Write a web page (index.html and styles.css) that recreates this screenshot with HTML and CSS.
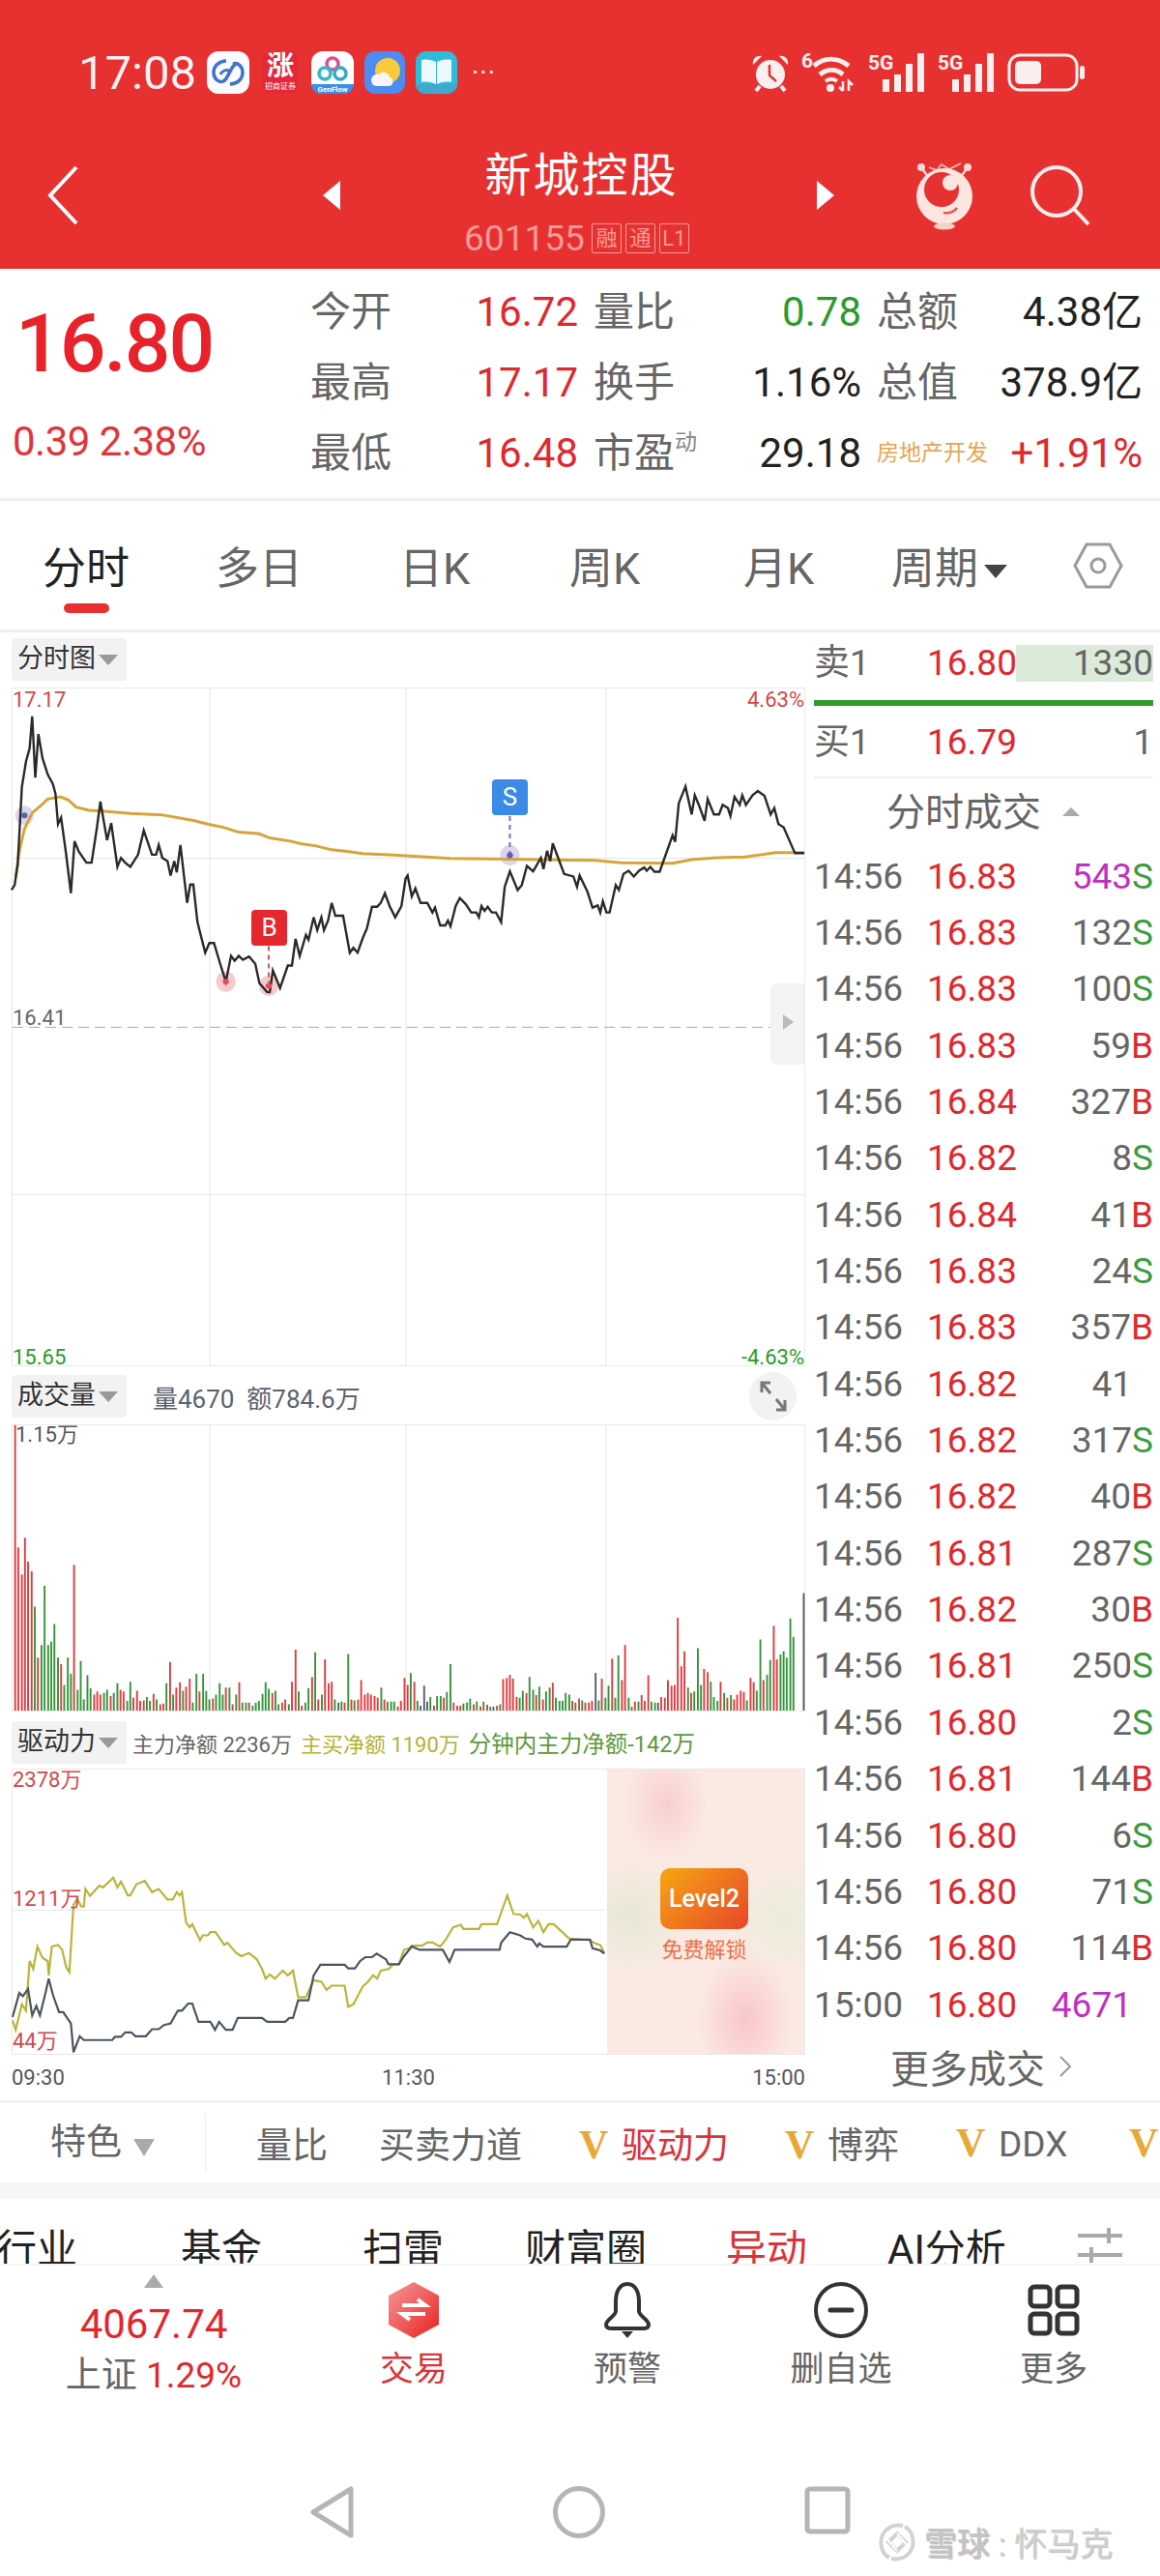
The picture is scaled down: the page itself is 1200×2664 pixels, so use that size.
FILE: index.html
```html
<!DOCTYPE html>
<html lang="zh">
<head>
    <meta charset="UTF-8">
    <meta name="viewport" content="width=device-width, initial-scale=1.0">
    <title>新城控股</title>
    <link rel="stylesheet" href="styles.css">
</head>
<body>
<div class="phone">
    <header class="top">
        <div class="status">
            <span class="clock">17:08</span>
            <div class="apps">
                <svg width="44" height="44" viewBox="0 0 44 44"><rect width="44" height="44" rx="12" fill="#fbfbff"/><path d="M20 10c-7 0-13 5-13 12 0 6 5 11 10 9 3-1 4-5 7-10 2-4 4-8 7-8M24 34c7 0 13-5 13-12 0-6-5-11-10-9" fill="none" stroke="#3f74c9" stroke-width="3.5"/><path d="M14 24c2-4 6-5 9-4" fill="none" stroke="#3f74c9" stroke-width="3"/></svg>
                <span class="app-zhang">涨<small>招商证券</small></span>
                <svg width="44" height="44" viewBox="0 0 44 44"><rect width="44" height="44" rx="12" fill="#fff"/><path d="M0 34h44a10 10 0 0 1-10 10H10A10 10 0 0 1 0 34z" fill="#3b8fe8"/><circle cx="22" cy="13" r="6" fill="none" stroke="#d8508f" stroke-width="3.5"/><circle cx="14" cy="23" r="6" fill="none" stroke="#36b7c9" stroke-width="3.5"/><circle cx="30" cy="23" r="6" fill="none" stroke="#36a9c9" stroke-width="3.5"/><text x="22" y="42" class="micro">GenFlow</text></svg>
                <svg width="42" height="44" viewBox="0 0 42 44"><rect width="42" height="44" rx="11" fill="#4b8df0"/><circle cx="24" cy="20" r="13" fill="#fbc93c"/><path d="M7 30c0-4 4-7 8-6 3-4 10-2 11 3 4 0 5 8 0 9H13c-4 0-6-3-6-6z" fill="#f4f6fb"/></svg>
                <svg width="43" height="44" viewBox="0 0 43 44"><rect width="43" height="44" rx="11" fill="#2dbdd8"/><path d="M0 34h43v0a10 10 0 0 1-10 10H10A10 10 0 0 1 0 34z" fill="#3fa8cf"/><path d="M6 9c6-1 11 0 15 2v23c-4-2-9-3-15-2zM37 9c-6-1-11 0-15 2v23c4-2 9-3 15-2z" fill="#eef8fd"/></svg>
                <span class="more-dots">···</span>
            </div>
            <div class="sys">
                <svg width="40" height="40" viewBox="0 0 40 40"><circle cx="20" cy="22" r="15" fill="#fbeeee"/><path d="M19 12v11l7 6" fill="none" stroke="#e73131" stroke-width="2.5"/><path d="M2 12C1 6 5 2 11 3zM38 12c1-6-3-10-9-9z" fill="#fbeeee"/><path d="M9 34l-4 5M31 34l4 5" stroke="#fbeeee" stroke-width="4"/></svg>
                <svg class="tall" width="57" height="50" viewBox="0 -10 57 50"><text x="0" y="15" class="tiny">6</text><path d="M13 13c11-9 24-9 36 0M19 22c8-6 17-6 24 0" fill="none" stroke="#fbeeee" stroke-width="5"/><path d="M25 29c4-3 8-3 12 0" fill="none" stroke="#fbeeee" stroke-width="4"/><circle cx="30" cy="36" r="4" fill="#fbeeee"/><path d="M43 29v10M39 35l4 4M49 39V29l4 4" fill="none" stroke="#fbeeee" stroke-width="2.5"/></svg>
                <svg class="tall" width="60" height="50" viewBox="0 -10 60 50"><text x="0" y="17" class="tiny">5G</text><path d="M15 27h7v13h-7zM27 22h7v18h-7zM39 11h7v29h-7zM51 0h7v40h-7z" fill="#fbeeee"/></svg>
                <svg class="tall" width="60" height="50" viewBox="0 -10 60 50"><text x="0" y="17" class="tiny">5G</text><path d="M15 27h7v13h-7zM27 22h7v18h-7zM39 11h7v29h-7zM51 0h7v40h-7z" fill="#fbeeee"/></svg>
                <svg width="81" height="40" viewBox="0 0 81 40"><rect x="2" y="2" width="70" height="36" rx="11" fill="none" stroke="#fbeeee" stroke-width="3"/><rect x="8" y="8" width="27" height="24" rx="5" fill="#fbeeee"/><rect x="75" y="13" width="5" height="14" rx="2.5" fill="#fbeeee"/></svg>
            </div>
        </div>
        <div class="nav">
            <svg class="back" width="34" height="62" viewBox="0 0 34 62"><path d="M31 2L4 31l27 29" fill="none" stroke="#fff" stroke-width="4"/></svg>
            <svg class="step" width="20" height="30" viewBox="0 0 20 30"><path d="M19 0v30L1 15z" fill="#fff"/></svg>
            <div class="title">
                <div class="name">新城控股</div>
                <div class="code"><span>601155</span><i>融</i><i>通</i><i>L1</i></div>
            </div>
            <svg class="step step-next" width="20" height="30" viewBox="0 0 20 30"><path d="M1 0v30l18-15z" fill="#fff"/></svg>
            <svg class="mascot" width="60" height="76" viewBox="0 0 60 76"><path d="M14 10l8 3 5-6 8 5 12-6" fill="none" stroke="#f9c8bd" stroke-width="1.5"/><circle cx="6" cy="10" r="4" fill="#fbd9d2"/><circle cx="54" cy="10" r="4" fill="#fbd9d2"/><path d="M8 13l6 8M52 13l-6 8" stroke="#fbd9d2" stroke-width="2.5"/><circle cx="30" cy="40" r="29" fill="#fde6e1"/><circle cx="27" cy="33" r="18" fill="#e73131"/><circle cx="36" cy="26" r="8" fill="#fde6e1"/><path d="M29 57c6 1 11-1 14-5" fill="none" stroke="#e8564e" stroke-width="2.5"/><ellipse cx="30" cy="71" rx="11" ry="3.5" fill="#f8d0c8"/></svg>
            <svg class="search" width="64" height="64" viewBox="0 0 64 64"><circle cx="28" cy="28" r="25" fill="none" stroke="#fdeeee" stroke-width="4"/><path d="M46 46l15 16" stroke="#fdeeee" stroke-width="4"/></svg>
        </div>
    </header>

    <section class="quote">
        <div class="last">
            <div class="last-price">16.80</div>
            <div class="last-change">0.39 2.38%</div>
        </div>
        <div class="stats">
            <span class="lab">今开</span><span class="val red">16.72</span>
            <span class="lab ind">量比</span><span class="val green">0.78</span>
            <span class="lab ind">总额</span><span class="val">4.38亿</span>
            <span class="lab">最高</span><span class="val red">17.17</span>
            <span class="lab ind">换手</span><span class="val">1.16%</span>
            <span class="lab ind">总值</span><span class="val">378.9亿</span>
            <span class="lab">最低</span><span class="val red">16.48</span>
            <span class="lab ind">市盈<sup>动</sup></span><span class="val">29.18</span>
            <span class="lab ind sector">房地产开发</span><span class="val red">+1.91%</span>
        </div>
    </section>

    <nav class="tabs">
        <span class="tab active">分时</span>
        <span class="tab">多日</span>
        <span class="tab">日K</span>
        <span class="tab">周K</span>
        <span class="tab">月K</span>
        <span class="tab">周期<b class="tri-down"></b></span>
        <svg width="52" height="48" viewBox="0 0 52 48"><path d="M14 2h24l12 22-12 22H14L2 24z" fill="none" stroke="#9a9a9a" stroke-width="3"/><circle cx="26" cy="24" r="7" fill="none" stroke="#9a9a9a" stroke-width="3"/></svg>
    </nav>

    <main class="market">
        <div class="charts">
            <div class="pane-head"><span class="picker">分时图<b></b></span></div>
            <div class="plot plot-price">
                <svg class="plot-svg" viewBox="22 153 1533 2106" preserveAspectRatio="none">
                    <path class="grid-line" d="M404 153V2259M784 153V2259M1171 153V2259M22 681H1555M22 1728H1555"/>
                    <path class="dash-line" d="M22 1207H1555"/>
                    <ellipse cx="45" cy="548" rx="18" ry="30" fill="#c9c4e6" opacity=".7"/>
                    <ellipse cx="435" cy="1065" rx="19" ry="32" fill="#f3b5b5" opacity=".7"/>
                    <ellipse cx="518" cy="1078" rx="19" ry="32" fill="#f3b5b5" opacity=".7"/>
                    <ellipse cx="985" cy="672" rx="19" ry="32" fill="#c9c4e6" opacity=".7"/>
                    <path class="avg-line" d="M28 740 35 660 45 590 60 540 75 520 90 497 115 490 130 500 145 522 170 532 200 535 250 542 310 546 370 563 400 575 430 585 460 600 500 605 520 618 560 628 580 636 610 643 640 655 670 660 700 667 760 671 870 682 985 684 1100 687 1150 688 1200 695 1300 697 1340 685 1380 680 1440 677 1500 664 1555 664"/>
                    <path class="price-line" d="M20 780 26 765 32 700 40 460 48 380 55 340 60 240 66 430 72 295 80 370 90 420 100 450 105 480 110 575 116 555 125 660 135 790 142 628 150 660 165 695 175 695 185 590 192 505 205 625 213 572 225 708 232 680 240 695 250 708 265 670 276 595 292 670 300 670 305 640 312 680 322 690 328 735 335 690 340 725 347 640 360 820 366 763 372 763 380 880 395 975 403 945 412 945 425 1015 435 1065 445 985 452 1000 460 985 468 997 480 987 492 1010 500 1070 515 1098 520 1098 526 1030 540 1085 555 1015 563 1015 570 932 578 985 590 920 595 935 605 865 612 905 620 865 625 905 633 875 640 820 647 860 662 860 675 975 682 960 690 975 700 930 708 900 718 832 728 832 735 820 743 790 752 830 763 865 775 830 783 745 787 735 795 800 802 775 812 820 825 820 835 850 840 835 850 890 860 890 865 875 870 893 880 830 888 805 900 825 910 850 920 850 925 865 930 830 936 845 942 832 950 850 958 850 968 880 975 770 985 722 1000 780 1008 765 1018 705 1030 722 1045 680 1050 715 1057 658 1063 690 1068 635 1090 730 1108 738 1115 770 1120 735 1135 785 1145 835 1155 828 1160 850 1165 815 1172 850 1178 850 1190 765 1196 780 1205 730 1215 720 1225 738 1235 720 1245 710 1250 720 1257 708 1265 723 1275 723 1300 610 1305 630 1312 510 1325 458 1337 545 1343 485 1352 520 1362 565 1368 497 1380 545 1390 545 1397 515 1407 525 1412 550 1420 490 1430 515 1435 485 1442 515 1455 485 1465 472 1478 487 1490 545 1497 525 1505 575 1515 585 1530 640 1537 665 1555 665"/>
                    <path class="pin-b" d="M518 955V1070"/>
                    <path class="pin-s" d="M985 550V665"/>
                    <ellipse cx="45" cy="548" rx="6" ry="9" fill="#5a5fb5"/>
                    <ellipse cx="435" cy="1065" rx="6" ry="9" fill="#e0505a"/>
                    <ellipse cx="518" cy="1078" rx="6" ry="9" fill="#e0505a"/>
                    <ellipse cx="985" cy="672" rx="6" ry="9" fill="#5a5fb5"/>
                </svg>
                <span class="axis tl faded-red">17.17</span>
                <span class="axis tr faded-red">4.63%</span>
                <span class="axis base-label">16.41</span>
                <span class="axis bl green">15.65</span>
                <span class="axis br green">-4.63%</span>
                <span class="flag flag-b">B</span>
                <span class="flag flag-s">S</span>
                <div class="handle"><b></b></div>
            </div>

            <div class="pane-head">
                <span class="picker">成交量<b></b></span>
                <span class="volume-info">量4670&nbsp;&nbsp;额784.6万</span>
                <span class="expand"><svg width="28" height="32" viewBox="0 0 28 32"><path d="M2 12V2h9M2 2l9 11M26 20v10h-9M26 30L17 19" fill="none" stroke="#777" stroke-width="3"/></svg></span>
            </div>
            <div class="plot plot-vol">
                <svg class="plot-svg" viewBox="22 219 1533 891" preserveAspectRatio="none">
                    <path class="grid-line" d="M404 219V1110M784 219V1110M1171 219V1110"/>
                    <path class="bar-red" d="M27 218V1110M33 600V1110M40 685V1110M46 570V1110M52 645V1110M59 675V1110M71 945V1110M116 965V1110M141 655V1110M180 1060V1110M186 1050V1110M192 1060V1110M212 1065V1110M231 1045V1110M237 1050V1110M256 1070V1110M263 1048V1110M269 1080V1110M276 1078V1110M295 1058V1110M308 1090V1110M314 1088V1110M327 958V1110M339 1038V1110M346 1022V1110M358 1035V1110M365 1010V1110M384 1050V1110M410 1072V1110M435 1038V1110M448 1090V1110M461 1022V1110M480 1085V1110M525 1055V1110M544 1085V1110M550 1075V1110M563 1020V1110M570 920V1110M582 1095V1110M602 1005V1110M614 1075V1110M627 950V1110M634 1025V1110M640 1020V1110M665 1085V1110M678 1075V1110M691 1075V1110M697 1015V1110M704 1060V1110M710 1055V1110M716 1060V1110M723 1065V1110M729 1070V1110M742 1075V1110M768 1097V1110M774 1080V1110M781 1008V1110M787 1030V1110M800 1020V1110M838 1095V1110M857 1070V1110M876 1085V1110M883 1095V1110M889 1095V1110M915 1090V1110M928 1097V1110M941 1092V1110M960 1095V1110M972 1012V1110M979 1008V1110M985 998V1110M991 1010V1110M998 1068V1110M1017 1055V1110M1036 1062V1110M1049 1075V1110M1068 1023V1110M1106 1080V1110M1119 1072V1110M1131 1085V1110M1138 1085V1110M1144 1080V1110M1163 1010V1110M1183 948V1110M1202 1015V1110M1208 905V1110M1227 1082V1110M1240 1062V1110M1246 1080V1110M1253 1000V1110M1278 1068V1110M1285 1070V1110M1291 1015V1110M1298 1032V1110M1304 1030V1110M1310 820V1110M1317 972V1110M1323 925V1110M1336 1055V1110M1361 980V1110M1368 990V1110M1393 1020V1110M1406 1070V1110M1419 1075V1110M1425 1060V1110M1432 1048V1110M1438 1052V1110M1451 1008V1110M1457 1022V1110M1476 1015V1110M1496 845V1110M1502 950V1110"/>
                    <path class="bar-green" d="M65 785V1110M78 905V1110M84 720V1110M91 905V1110M97 895V1110M103 840V1110M110 945V1110M122 1030V1110M129 945V1110M135 995V1110M148 1045V1110M154 955V1110M160 1075V1110M167 1000V1110M173 1040V1110M199 1055V1110M205 1045V1110M218 1055V1110M225 1025V1110M244 1080V1110M250 1020V1110M282 1068V1110M288 1080V1110M301 1075V1110M320 1025V1110M333 1060V1110M352 1048V1110M371 1085V1110M378 995V1110M391 995V1110M397 1048V1110M403 1075V1110M416 1060V1110M423 1025V1110M429 1060V1110M442 1038V1110M455 1060V1110M467 1085V1110M474 1085V1110M487 1095V1110M493 1085V1110M499 1080V1110M506 1058V1110M512 1022V1110M518 1042V1110M531 1048V1110M537 1090V1110M557 1090V1110M576 1050V1110M589 1085V1110M595 1040V1110M608 928V1110M621 1060V1110M646 1075V1110M659 1082V1110M672 933V1110M684 1078V1110M736 1038V1110M748 1082V1110M755 1082V1110M761 1082V1110M793 993V1110M806 1080V1110M831 1068V1110M844 1065V1110M851 1065V1110M863 1052V1110M870 965V1110M895 1088V1110M902 1085V1110M908 1073V1110M921 1082V1110M934 1082V1110M947 1098V1110M966 1090V1110M1004 1070V1110M1010 1048V1110M1023 1005V1110M1030 1045V1110M1042 1035V1110M1055 1050V1110M1062 1038V1110M1074 1070V1110M1081 1080V1110M1087 1080V1110M1093 1055V1110M1100 1060V1110M1112 1085V1110M1125 1078V1110M1157 1078V1110M1170 1070V1110M1176 1032V1110M1189 1070V1110M1195 938V1110M1215 1070V1110M1221 1098V1110M1234 1082V1110M1259 1082V1110M1266 1085V1110M1330 1038V1110M1342 1050V1110M1349 915V1110M1355 1030V1110M1374 1020V1110M1380 1068V1110M1387 1080V1110M1400 1055V1110M1413 1062V1110M1444 1078V1110M1463 1048V1110M1470 888V1110M1483 998V1110M1489 952V1110M1509 935V1110M1515 925V1110M1521 945V1110M1528 822V1110M1534 880V1110"/>
                    <path class="bar-dark" d="M653 1085V1110M812 1095V1110M819 1032V1110M825 1082V1110M953 1098V1110M1151 992V1110M1272 1085V1110M1554 743V1110"/>
                </svg>
                <span class="axis vol-max">1.15万</span>
            </div>

            <div class="pane-head">
                <span class="picker">驱动力<b></b></span>
                <span class="legend grey">主力净额 2236万</span>
                <span class="legend olive">主买净额 1190万</span>
                <span class="legend moss">分钟内主力净额-142万</span>
            </div>
            <div class="plot plot-drive">
                <svg class="plot-svg" viewBox="22 147 1533 888" preserveAspectRatio="none">
                    <path class="grid-line" d="M22 586H1170"/>
                    <path class="drive-olive" d="M22 930 28 960 40 880 48 900 55 745 62 770 70 700 80 735 90 745 92 790 98 700 110 695 118 710 126 765 132 780 140 570 147 550 155 575 160 575 163 520 172 542 190 510 197 515 217 485 225 515 232 497 245 540 250 540 262 505 278 495 292 530 305 520 322 553 332 553 340 530 345 540 350 530 358 625 365 640 370 630 385 680 390 665 400 665 405 655 415 655 432 695 438 688 455 720 465 730 480 720 495 740 505 770 512 800 520 787 530 800 545 775 555 790 565 775 575 858 590 858 605 805 620 810 630 835 640 822 665 822 672 888 682 880 700 825 710 810 720 790 728 800 735 775 750 770 760 755 770 755 780 710 790 705 795 697 815 697 825 687 835 687 850 700 860 680 875 640 890 632 895 645 925 645 930 630 960 630 980 540 992 598 1005 600 1012 610 1018 598 1030 640 1040 620 1050 655 1060 630 1070 630 1100 675 1140 680 1150 690 1160 695 1168 720"/>
                    <path class="drive-dark" d="M22 920 35 845 42 855 52 832 60 915 68 885 75 915 85 850 92 800 100 850 112 905 120 905 135 940 140 1030 152 980 160 992 215 992 220 982 232 982 240 968 252 968 260 980 280 980 292 958 305 958 315 945 328 940 342 900 350 900 362 878 370 878 382 935 405 935 414 960 422 935 435 960 448 960 458 923 505 923 515 935 550 935 558 923 565 923 575 868 595 868 605 790 618 757 665 757 672 768 685 768 695 745 705 733 718 733 727 722 745 740 750 755 770 755 780 730 795 700 810 710 855 710 868 748 878 710 965 710 968 688 985 655 1005 665 1015 675 1028 678 1038 700 1042 690 1050 700 1095 700 1103 678 1140 678 1145 705 1160 712 1168 722"/>
                </svg>
                <span class="axis dr-top faded-red">2378万</span>
                <span class="axis dr-mid faded-red">1211万</span>
                <span class="axis dr-low faded-red">44万</span>
                <div class="locked">
                    <div class="lv2">Level2</div>
                    <div class="unlock">免费解锁</div>
                </div>
            </div>
            <div class="times"><span>09:30</span><span>11:30</span><span>15:00</span></div>
        </div>

        <aside class="book">
            <div class="level ask"><span>卖1</span><span class="red">16.80</span><span class="ask-vol">1330</span></div>
            <div class="spread"></div>
            <div class="level bid"><span>买1</span><span class="red">16.79</span><span class="num">1</span></div>
            <div class="book-title">分时成交<b></b></div>
            <div class="ticks">
                <div class="tick"><span>14:56</span><span class="red">16.83</span><span class="num"><em class="big">543</em><em class="s">S</em></span></div>
                <div class="tick"><span>14:56</span><span class="red">16.83</span><span class="num">132<em class="s">S</em></span></div>
                <div class="tick"><span>14:56</span><span class="red">16.83</span><span class="num">100<em class="s">S</em></span></div>
                <div class="tick"><span>14:56</span><span class="red">16.83</span><span class="num">59<em class="b">B</em></span></div>
                <div class="tick"><span>14:56</span><span class="red">16.84</span><span class="num">327<em class="b">B</em></span></div>
                <div class="tick"><span>14:56</span><span class="red">16.82</span><span class="num">8<em class="s">S</em></span></div>
                <div class="tick"><span>14:56</span><span class="red">16.84</span><span class="num">41<em class="b">B</em></span></div>
                <div class="tick"><span>14:56</span><span class="red">16.83</span><span class="num">24<em class="s">S</em></span></div>
                <div class="tick"><span>14:56</span><span class="red">16.83</span><span class="num">357<em class="b">B</em></span></div>
                <div class="tick"><span>14:56</span><span class="red">16.82</span><span class="num pad">41</span></div>
                <div class="tick"><span>14:56</span><span class="red">16.82</span><span class="num">317<em class="s">S</em></span></div>
                <div class="tick"><span>14:56</span><span class="red">16.82</span><span class="num">40<em class="b">B</em></span></div>
                <div class="tick"><span>14:56</span><span class="red">16.81</span><span class="num">287<em class="s">S</em></span></div>
                <div class="tick"><span>14:56</span><span class="red">16.82</span><span class="num">30<em class="b">B</em></span></div>
                <div class="tick"><span>14:56</span><span class="red">16.81</span><span class="num">250<em class="s">S</em></span></div>
                <div class="tick"><span>14:56</span><span class="red">16.80</span><span class="num">2<em class="s">S</em></span></div>
                <div class="tick"><span>14:56</span><span class="red">16.81</span><span class="num">144<em class="b">B</em></span></div>
                <div class="tick"><span>14:56</span><span class="red">16.80</span><span class="num">6<em class="s">S</em></span></div>
                <div class="tick"><span>14:56</span><span class="red">16.80</span><span class="num">71<em class="s">S</em></span></div>
                <div class="tick"><span>14:56</span><span class="red">16.80</span><span class="num">114<em class="b">B</em></span></div>
                <div class="tick"><span>15:00</span><span class="red">16.80</span><span class="num pad"><em class="big">4671</em></span></div>
            </div>
            <div class="more-ticks">更多成交<svg width="14" height="24" viewBox="0 0 14 24"><path d="M2 2l10 10L2 22" fill="none" stroke="#999" stroke-width="2"/></svg></div>
        </aside>
    </main>

    <div class="features">
        <span class="feat feat-first">特色<b class="tri-small"></b></span>
        <span class="feat">量比</span>
        <span class="feat">买卖力道</span>
        <span class="feat"><i class="vip">V</i><em class="feat-on">驱动力</em></span>
        <span class="feat"><i class="vip">V</i>博弈</span>
        <span class="feat"><i class="vip">V</i>DDX</span>
        <span class="feat"><i class="vip">V</i></span>
    </div>
    <div class="band"></div>
    <div class="news-tabs">
        <span>行业</span>
        <span>基金</span>
        <span>扫雷</span>
        <span>财富圈</span>
        <span class="news-on">异动</span>
        <span>AI分析</span>
        <svg width="46" height="40" viewBox="0 0 46 40"><path d="M0 10h46M0 30h46M32 2v16M14 22v16" stroke="#aaa" stroke-width="4" fill="none"/></svg>
    </div>

    <footer class="dock">
        <div class="index">
            <b class="tri-up"></b>
            <div class="index-val">4067.74</div>
            <div class="index-name">上证 <span class="red">1.29%</span></div>
        </div>
        <div class="dock-item trade">
            <svg width="52" height="58" viewBox="0 0 52 58"><defs><linearGradient id="tradeFill" x1="0" y1="0" x2="1" y2="1"><stop offset="0" stop-color="#f59a9a"/><stop offset="1" stop-color="#e8211f"/></linearGradient></defs><path d="M26 0l26 14v30L26 58 0 44V14z" fill="url(#tradeFill)"/><path d="M14 24h24l-8-6M38 33H14l8 6" fill="none" stroke="#fff" stroke-width="4"/></svg>
            <span>交易</span>
        </div>
        <div class="dock-item">
            <svg width="48" height="58" viewBox="0 0 48 58"><path d="M24 2c-8 0-12 8-12 18v10c0 5-10 9-10 14 0 3 3 4 6 4h32c3 0 6-1 6-4 0-5-10-9-10-14V20c0-10-4-18-12-18z" fill="none" stroke="#333" stroke-width="4"/><path d="M18 51h12l-6 7z" fill="#333"/></svg>
            <span>预警</span>
        </div>
        <div class="dock-item">
            <svg width="56" height="58" viewBox="0 0 56 58"><ellipse cx="28" cy="29" rx="26" ry="27" fill="none" stroke="#333" stroke-width="4"/><path d="M17 29h22" stroke="#333" stroke-width="5" stroke-linecap="round"/></svg>
            <span>删自选</span>
        </div>
        <div class="dock-item">
            <svg width="54" height="58" viewBox="0 -2 54 58"><rect x="3" y="3" width="20" height="20" rx="4" fill="none" stroke="#333" stroke-width="5"/><rect x="31" y="3" width="20" height="20" rx="4" fill="none" stroke="#333" stroke-width="5"/><rect x="3" y="31" width="20" height="20" rx="4" fill="none" stroke="#333" stroke-width="5"/><rect x="31" y="31" width="20" height="20" rx="4" fill="none" stroke="#333" stroke-width="5"/></svg>
            <span>更多</span>
        </div>
    </footer>

    <div class="sys-nav">
        <svg width="46" height="54" viewBox="0 0 46 54"><path d="M42 3v48L3 27z" fill="none" stroke="#b5b5b5" stroke-width="5" stroke-linejoin="round"/></svg>
        <svg width="54" height="54" viewBox="0 0 54 54"><circle cx="27" cy="27" r="24.5" fill="none" stroke="#b5b5b5" stroke-width="5"/></svg>
        <svg width="48" height="50" viewBox="0 0 48 50"><rect x="3" y="3" width="42" height="44" rx="3" fill="none" stroke="#b5b5b5" stroke-width="5"/></svg>
        <div class="watermark">
            <svg width="40" height="40" viewBox="0 0 40 40"><path d="M26 3C11 0 1 12 4 25c1 5 4 9 8 11M14 37c15 3 25-9 22-22-1-5-4-9-8-11M11 20l9-9 9 9-9 9z" fill="none" stroke="#d2d2d2" stroke-width="4"/><path d="M20 11l12 14M20 29L8 15" stroke="#fff" stroke-width="2"/></svg>
            <span><b>雪球</b> : 怀马克</span>
        </div>
    </div>
</div>
</body>
</html>
```

FILE: styles.css
```css
*{
    margin:0;
    padding:0;
    box-sizing:border-box;
}
body{
    background:#fff;
    font-family:Roboto,"Noto Sans CJK SC",sans-serif;
    color:#222;
}
em,i{
    font-style:normal;
}
.phone{
    width:1200px;
    height:2664px;
    overflow:hidden;
    display:flex;
    flex-direction:column;
}
.red{color:#e0282e;}
.green{color:#2b9a2b;}
.grey{color:#666;}
.faded-red{color:#d2484c;}

/* header */
.top{
    height:278px;
    background:#e73131;
    color:#fff;
}
.status{
    height:148px;
    padding:2px 77px 0 81px;
    display:flex;
    align-items:center;
}
.clock{
    width:133px;
    font-size:49px;
    color:#fdf0f0;
}
.apps{
    display:flex;
    align-items:center;
}
.apps > *:nth-child(2){margin-left:14px;}
.apps > *:nth-child(3){margin-left:14px;}
.apps > *:nth-child(4){margin-left:11px;}
.apps > *:nth-child(5){margin-left:11px;}
.app-zhang{
    width:36px;
    height:44px;
    background:#e4283a;
    border-radius:8px;
    font-size:28px;
    font-weight:700;
    line-height:32px;
    text-align:center;
    overflow:hidden;
}
.app-zhang small{
    display:block;
    font-size:8px;
    font-weight:400;
    line-height:10px;
}
.micro{
    font:700 8px Roboto,sans-serif;
    fill:#fff;
    text-anchor:middle;
}
.more-dots{
    margin-left:15px;
    font-size:28px;
    line-height:40px;
    letter-spacing:1px;
}
.sys{
    margin-left:auto;
    display:flex;
    align-items:center;
    gap:12px;
}
.tall{
    margin-top:-10px;
}
.tiny{
    font:700 21px Roboto,sans-serif;
    fill:#fbeeee;
}
.nav{
    height:130px;
    padding:0 0 13px 48px;
    display:flex;
    align-items:center;
}
.back{margin-top:-9px;}
.step{
    margin-left:251px;
    margin-top:-9px;
}
.step-next{margin-left:0;}
.title{
    width:491px;
    text-align:center;
    flex-shrink:0;
}
.name{
    padding-left:6px;
    font-size:48px;
    line-height:66px;
    letter-spacing:2px;
}
.code{
    display:flex;
    justify-content:center;
    align-items:center;
    height:36px;
    margin-top:13px;
    padding-right:4px;
    color:#f49a9a;
    font-size:37px;
}
.code i{
    width:31px;
    height:31px;
    margin-left:4px;
    border:1px solid #f49a9a;
    border-radius:2px;
    font-size:22px;
    line-height:29px;
    text-align:center;
}
.code span{margin-right:3px;}
.mascot{
    margin-left:83px;
    margin-top:-12px;
}
.search{
    margin-left:58px;
    margin-top:-10px;
}

/* quote block */
.quote{
    height:240px;
    border-bottom:3px solid #f0f0f0;
    display:flex;
}
.last{
    width:321px;
    padding-left:13px;
    flex-shrink:0;
}
.last-price{
    margin:34px 0 0 3px;
    font-size:84px;
    line-height:88px;
    letter-spacing:-2px;
    color:#e8222a;
    font-weight:500;
}
.last-change{
    margin-top:37px;
    font-size:42px;
    line-height:40px;
    letter-spacing:-0.5px;
    color:#e0353a;
    white-space:nowrap;
}
.stats{
    width:861px;
    padding-top:8px;
    display:grid;
    grid-template-columns:85px 192px 101px 192px 100px 191px;
    grid-auto-rows:73px;
    align-items:center;
}
.lab{
    font-size:42px;
    color:#666;
    white-space:nowrap;
    line-height:50px;
}
.ind{padding-left:16px;}
.lab sup{
    font-size:23px;
    line-height:0;
    vertical-align:18px;
    color:#888;
}
.val{
    text-align:right;
    font-size:42px;
    white-space:nowrap;
    line-height:50px;
}
.sector{
    font-size:23px;
    color:#e7a550;
}

/* period tabs */
.tabs{
    height:136px;
    padding-left:44px;
    border-bottom:3px solid #f0f0f0;
    display:grid;
    grid-template-columns:179px 190px 176px 180px 153px 188px 52px;
    align-items:center;
}
.tab{
    position:relative;
    font-size:45px;
    color:#666;
    white-space:nowrap;
}
.tab.active{color:#222;}
.tab.active::after{
    content:"";
    position:absolute;
    left:22px;
    top:72px;
    width:47px;
    height:10px;
    border-radius:5px;
    background:#e73131;
}
.tri-down{
    display:inline-block;
    margin-left:6px;
    vertical-align:6px;
    border:12px solid transparent;
    border-top:14px solid #444;
    border-bottom:0;
}

/* chart column */
.market{
    height:1518px;
    display:flex;
    flex-shrink:0;
}
.charts{
    width:838px;
    padding:6px 5px 0 12px;
    flex-shrink:0;
}
.pane-head{
    height:44px;
    display:flex;
    align-items:center;
}
.picker{
    width:119px;
    height:44px;
    padding-left:6px;
    background:#f2f2f2;
    border-radius:4px;
    font-size:27px;
    line-height:42px;
    color:#333;
    white-space:nowrap;
    flex-shrink:0;
}
.picker b{
    display:inline-block;
    margin-left:3px;
    vertical-align:2px;
    border:10px solid transparent;
    border-top:11px solid #999;
    border-bottom:0;
}
.plot{
    position:relative;
    border:1px solid #e8e8e8;
}
.plot-price{
    height:702px;
    margin:7px 0 9px;
}
.plot-vol{
    height:297px;
    margin:7px 0 10px;
}
.plot-drive{
    height:296px;
    margin-top:5px;
}
.plot-svg{
    position:absolute;
    inset:0;
    width:100%;
    height:100%;
    overflow:visible;
}
.plot-svg path{
    fill:none;
    vector-effect:non-scaling-stroke;
}
.grid-line{
    stroke:#e6e6e6;
    stroke-width:1;
}
.dash-line{
    stroke:#aaa;
    stroke-width:1;
    stroke-dasharray:11 6;
}
.price-line{
    stroke:#2a2a2a;
    stroke-width:2.4;
}
.avg-line{
    stroke:#d6a53a;
    stroke-width:3;
}
.pin-b{
    stroke:#c85a6e;
    stroke-width:2;
    stroke-dasharray:5 4;
}
.pin-s{
    stroke:#7470b0;
    stroke-width:2;
    stroke-dasharray:5 4;
}
.bar-red{
    stroke:#dd3d42;
    stroke-width:1.9;
}
.bar-green{
    stroke:#35933a;
    stroke-width:1.9;
}
.bar-dark{
    stroke:#56606a;
    stroke-width:1.9;
}
.drive-olive{
    stroke:#b9b53c;
    stroke-width:2.2;
}
.drive-dark{
    stroke:#4b5560;
    stroke-width:2.2;
}
.axis{
    position:absolute;
    font-size:22px;
    line-height:26px;
    white-space:nowrap;
}
.tl{left:0;top:-1px;}
.tr{right:0;top:-1px;}
.bl{left:0;bottom:-5px;}
.br{right:0;bottom:-5px;}
.base-label{
    left:0;
    top:328px;
    color:#666;
}
.vol-max{
    left:3px;
    top:-3px;
    color:#555;
}
.dr-top{left:0;top:-2px;}
.dr-mid{left:0;top:121px;}
.dr-low{left:0;top:268px;}
.flag{
    position:absolute;
    width:37px;
    height:37px;
    border-radius:4px;
    color:#fff;
    font-size:26px;
    line-height:37px;
    text-align:center;
}
.flag-b{
    left:247px;
    top:229px;
    background:#e4282e;
}
.flag-s{
    left:496px;
    top:94px;
    background:#3b8ae6;
}
.handle{
    position:absolute;
    right:0;
    top:305px;
    width:35px;
    height:84px;
    background:#f5f3f3;
    border-radius:8px 0 0 8px;
}
.handle b{
    position:absolute;
    left:13px;
    top:32px;
    border:8px solid transparent;
    border-left:11px solid #bbb;
    border-right:0;
}
.volume-info{
    margin-left:27px;
    font-size:26px;
    color:#5a6270;
    white-space:nowrap;
}
.expand{
    width:49px;
    height:50px;
    margin-left:auto;
    margin-right:9px;
    background:#f3f1f1;
    border-radius:50%;
    display:flex;
    align-items:center;
    justify-content:center;
}
.legend{
    font-size:22px;
    white-space:nowrap;
    margin-left:9px;
}
.legend:nth-child(2){margin-left:6px;}
.olive{color:#b5b233;}
.moss{
    color:#5c9a3c;
    font-size:23.5px;
}
.locked{
    position:absolute;
    left:615px;
    right:0;
    top:0;
    bottom:0;
    background:
        radial-gradient(ellipse 45px 60px at 30% 12%,#f9cfd0,transparent),
        radial-gradient(ellipse 50px 70px at 70% 88%,#f9c6c8,transparent),
        radial-gradient(ellipse 60px 60px at 12% 52%,#e6e8d4,transparent),
        radial-gradient(ellipse 60px 60px at 90% 52%,#e8edd9,transparent),
        #fbeae3;
    padding-top:102px;
    text-align:center;
}
.lv2{
    width:91px;
    height:63px;
    margin-left:55px;
    border-radius:10px;
    background:linear-gradient(135deg,#f6a712,#e8452a);
    color:#fff;
    font-size:25px;
    font-weight:500;
    line-height:63px;
}
.unlock{
    width:91px;
    margin:5px 0 0 55px;
    font-size:22px;
    line-height:34px;
    color:#ea7048;
    white-space:nowrap;
}
.times{
    height:47px;
    display:flex;
    justify-content:space-between;
    align-items:center;
    font-size:22px;
    color:#555;
}

/* order book */
.book{
    flex:1;
    padding:13px 7px 0 4px;
}
.level,.tick{
    display:grid;
    grid-template-columns:117px 90px 1fr;
    align-items:center;
    font-size:37px;
    color:#666;
}
.level{line-height:38px;}
.ask{height:38px;}
.ask-vol{
    margin-left:2px;
    height:38px;
    background:#dcebd9;
    text-align:right;
}
.spread{
    height:6px;
    margin-top:19px;
    background:#2e9b2e;
}
.bid{
    height:75px;
    padding-top:3px;
    border-bottom:2px solid #f0f0f0;
}
.num{
    text-align:right;
    white-space:nowrap;
}
.num.pad{padding-right:22px;}
.book-title{
    height:72px;
    line-height:72px;
    padding-left:75px;
    font-size:40px;
    color:#666;
}
.book-title b{
    display:inline-block;
    margin-left:22px;
    vertical-align:10px;
    border:9px solid transparent;
    border-bottom:9px solid #aaa;
    border-top:0;
}
.tick{height:58.35px;}
.s{color:#3d9b3d;}
.b{color:#e0282e;}
.big{color:#c030c0;}
.more-ticks{
    height:70px;
    padding-left:79px;
    display:flex;
    align-items:center;
    gap:14px;
    font-size:40px;
    color:#666;
}

/* bottom strips */
.features{
    height:85px;
    padding-left:52px;
    border-top:3px solid #f2f2f2;
    display:grid;
    grid-template-columns:213px 127px 207px 213px 177px 179px 40px;
    align-items:center;
    font-size:37px;
    color:#666;
    white-space:nowrap;
    flex-shrink:0;
}
.feat-first{
    width:161px;
    height:60px;
    line-height:60px;
    border-right:1px solid #efefef;
}
.tri-small{
    display:inline-block;
    margin-left:12px;
    vertical-align:-2px;
    border:11px solid transparent;
    border-top:18px solid #aaa;
    border-bottom:0;
}
.vip{
    display:inline-block;
    width:44px;
    font:700 42px "Liberation Serif",serif;
    color:#e8a838;
}
.feat-on{color:#d8343a;}
.band{
    height:17px;
    background:#f6f6f6;
    flex-shrink:0;
}
.news-tabs{
    height:67px;
    margin-left:-4px;
    padding-top:30px;
    overflow:hidden;
    display:grid;
    grid-template-columns:191px 188px 168px 208px 167px 197px 46px;
    font-size:42px;
    line-height:46px;
    color:#222;
    white-space:nowrap;
    flex-shrink:0;
}
.news-tabs svg{margin-top:-2px;}
.news-on{color:#d8343a;}

.dock{
    height:179px;
    border-top:2px solid #f5f5f5;
    display:grid;
    grid-template-columns:318px 220px 222px 220px 220px;
    flex-shrink:0;
}
.index{
    text-align:center;
    white-space:nowrap;
}
.tri-up{
    display:block;
    width:0;
    margin:9px auto 0;
    border:10px solid transparent;
    border-bottom:14px solid #aaa;
    border-top:0;
}
.index-val{
    margin-top:14px;
    font-size:42px;
    line-height:48px;
    color:#e0282e;
}
.index-name{
    margin-top:4px;
    font-size:37px;
    line-height:50px;
    color:#666;
}
.dock-item{
    padding-top:17px;
    display:flex;
    flex-direction:column;
    align-items:center;
    font-size:35px;
    color:#666;
}
.dock-item span{
    margin-top:8px;
    line-height:50px;
}
.trade span{color:#d8343a;}
.sys-nav{
    position:relative;
    flex:1;
    padding:51px 0 0 321px;
    display:flex;
    align-items:flex-start;
}
.sys-nav svg:nth-child(2){margin-left:205px;}
.sys-nav svg:nth-child(3){margin-left:206px;}
.watermark{
    position:absolute;
    left:908px;
    top:84px;
    display:flex;
    align-items:center;
    gap:8px;
    font-size:34px;
    color:#d0d0d0;
    text-shadow:1px 1px 1px #bdbdbd;
    white-space:nowrap;
}
.watermark b{
    font-weight:500;
    color:#c4c4c4;
}
```
